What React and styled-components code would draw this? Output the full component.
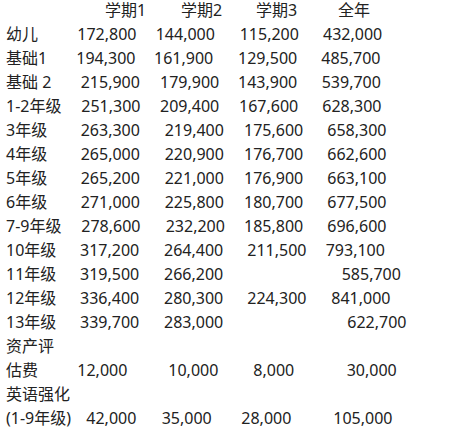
import styled, { createGlobalStyle } from 'styled-components';

const GlobalStyle = createGlobalStyle`
  body {
    margin: 0;
    background: #fff;
  }
`;

// x-offsets (px) of each value inside its column, read off the original document
const header = ['学期1', '学期2', '学期3', '全年'];
const headerIndent = [29, 27, 18, 18];

const rows = [
  ['幼儿', ['172,800', 1.3], ['144,000', 1.7], ['115,200', 1.7], ['432,000', 3]],
  ['基础1', ['194,300', 0.3], ['161,900', 0], ['129,500', 0], ['485,700', 1.3]],
  ['基础 2', ['215,900', 4.7], ['179,900', 6], ['143,900', 0], ['539,700', 1.7]],
  ['1-2年级', ['251,300', 5.3], ['209,400', 6], ['167,600', 1], ['628,300', 2.3]],
  ['3年级', ['263,300', 4.7], ['219,400', 10.7], ['175,600', 6], ['658,300', 7.3]],
  ['4年级', ['265,000', 4.7], ['220,900', 10.7], ['176,700', 6], ['662,600', 7.3]],
  ['5年级', ['265,200', 4.7], ['221,000', 10.7], ['176,900', 6], ['663,100', 7.3]],
  ['6年级', ['271,000', 4.7], ['225,800', 10.7], ['180,700', 6], ['677,500', 7.3]],
  ['7-9年级', ['278,600', 5.3], ['232,200', 11.7], ['185,800', 6], ['696,600', 7.3]],
  ['10年级', ['317,200', 4], ['264,400', 10], ['211,500', 9.3], ['793,100', 5.7]],
  ['11年级', ['319,500', 4], ['266,200', 10], null, ['585,700', 21.7]],
  ['12年级', ['336,400', 4], ['280,300', 10], ['224,300', 9.3], ['841,000', 11.3]],
  ['13年级', ['339,700', 4], ['283,000', 10], null, ['622,700', 27.3]],
  ['资产评'],
  ['估费', ['12,000', 1.3], ['10,000', 14.3], ['8,000', 15.3], ['30,000', 26.7]],
  ['英语强化'],
  ['(1-9年级)', ['42,000', 10.3], ['35,000', 7.7], ['28,000', 3.3], ['105,000', 13.3]],
];

export default function App() {
  return (
    <>
      <GlobalStyle />
      <Sheet>
        <Row>
          <Label />
          {header.map((h, i) => (
            <Cell key={h} $indent={headerIndent[i]}>{h}</Cell>
          ))}
        </Row>
        {rows.map(([label, ...cells]) => (
          <Row key={label}>
            <Label>{label}</Label>
            {[0, 1, 2, 3].map((i) => {
              const c = cells[i];
              return c ? (
                <Cell key={i} $indent={c[1]}>{c[0]}</Cell>
              ) : (
                <Cell key={i} />
              );
            })}
          </Row>
        ))}
      </Sheet>
    </>
  );
}

const Sheet = styled.div`
  display: flex;
  flex-direction: column;
  padding-left: 6px;
  margin-top: -2px;
  font-family: 'Noto Sans', 'Noto Sans CJK SC', sans-serif;
  font-size: 16px;
  line-height: 24px;
  color: #222;
`;

const Row = styled.div`
  display: grid;
  grid-template-columns: 70px 78px 84px 82px 1fr;
  height: 24px;
  white-space: pre;
`;

const Label = styled.div`
  overflow: visible;
`;

const Cell = styled.div`
  padding-left: ${(p) => p.$indent || 0}px;
`;
